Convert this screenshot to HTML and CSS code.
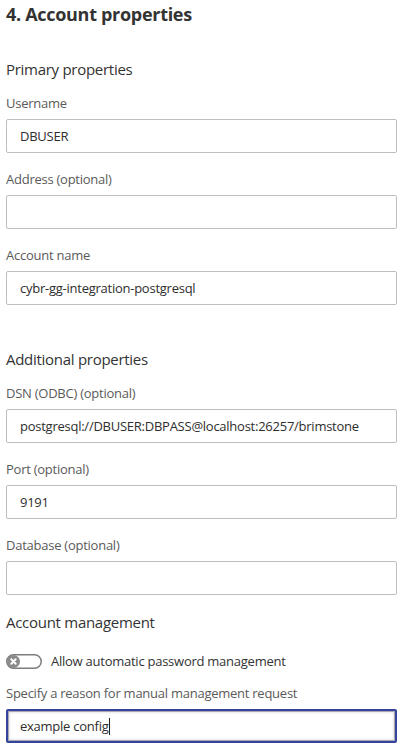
FILE: index.html
```html
<!DOCTYPE html>
<html lang="en">
<head>
<meta charset="utf-8">
<title>Account properties</title>
<link rel="stylesheet" href="styles.css">
</head>
<body>
<main class="panel">
  <h2 class="title">4. Account properties</h2>

  <section class="group group-primary">
    <h3 class="section-title">Primary properties</h3>
    <div class="field">
      <label class="label" for="username">Username</label>
      <input class="input" id="username" type="text" value="DBUSER">
    </div>
    <div class="field">
      <label class="label" for="address">Address (optional)</label>
      <input class="input" id="address" type="text" value="">
    </div>
    <div class="field">
      <label class="label" for="accname">Account name</label>
      <input class="input" id="accname" type="text" value="cybr-gg-integration-postgresql">
    </div>
  </section>

  <section class="group group-additional">
    <h3 class="section-title">Additional properties</h3>
    <div class="field">
      <label class="label" for="dsn">DSN (ODBC) (optional)</label>
      <input class="input" id="dsn" type="text" value="postgresql://DBUSER:DBPASS@localhost:26257/brimstone">
    </div>
    <div class="field">
      <label class="label" for="port">Port (optional)</label>
      <input class="input" id="port" type="text" value="9191">
    </div>
    <div class="field">
      <label class="label" for="database">Database (optional)</label>
      <input class="input" id="database" type="text" value="">
    </div>
  </section>

  <section class="group group-management">
    <h3 class="section-title">Account management</h3>
    <div class="toggle-row">
      <svg class="toggle" width="36" height="15" viewBox="0 0 36 15" aria-hidden="true">
        <rect x="0.75" y="0.75" width="34.5" height="13.5" rx="6.75" fill="#fff" stroke="#7d7d7d" stroke-width="1.5"/>
        <circle cx="7.5" cy="7.5" r="6.5" fill="#8a8a8a"/>
        <path d="M5.3 5.3 L9.7 9.7 M9.7 5.3 L5.3 9.7" stroke="#fff" stroke-width="2" stroke-linecap="round"/>
      </svg>
      <span class="toggle-label">Allow automatic password management</span>
    </div>
    <div class="field field-reason">
      <label class="label" for="reason">Specify a reason for manual management request</label>
      <div class="input input-focused" id="reason" role="textbox">example config<span class="caret"></span></div>
    </div>
  </section>
</main>
</body>
</html>
```

FILE: styles.css
```css
* {
  box-sizing: border-box;
}

html, body {
  margin: 0;
  padding: 0;
  background: #ffffff;
}

body {
  font-family: "Open Sans", "Liberation Sans", sans-serif;
  color: #333333;
  letter-spacing: -0.25px;
}

.panel {
  width: 397px;
  padding-left: 6px;
  display: flex;
  flex-direction: column;
}

.title {
  margin: 0;
  padding-top: 2px;
  font-size: 18px;
  line-height: 24px;
  font-weight: 700;
  color: #333333;
  letter-spacing: -0.3px;
}

.group {
  display: flex;
  flex-direction: column;
}

.group-primary {
  margin-top: 33px;
}

.group-additional {
  margin-top: 27px;
}

.section-title {
  margin: 0 0 15px 0;
  font-size: 15px;
  line-height: 20px;
  font-weight: 400;
  color: #333333;
  letter-spacing: -0.28px;
}

.field {
  display: flex;
  flex-direction: column;
  margin-bottom: 17px;
}

.label {
  font-size: 13px;
  line-height: 18px;
  color: #5a5a5a;
  margin-bottom: 7px;
}

.input {
  display: flex;
  align-items: center;
  width: 391px;
  height: 34px;
  margin: 0;
  padding: 0 12px 0 13px;
  border: 1px solid #bdbdbd;
  border-radius: 2px;
  font-family: "Open Sans", "Liberation Sans", sans-serif;
  font-size: 13px;
  letter-spacing: -0.25px;
  color: #2e2e2e;
  background: #ffffff;
  outline: none;
}

.input-focused {
  border: 2px solid #34449c;
  padding-left: 12px;
  box-shadow: inset 0 0 0 1px #a9a9b4, inset 0 0 3px 1px rgba(0, 0, 0, 0.18);
  white-space: pre;
}

.caret {
  display: inline-block;
  width: 1px;
  height: 17px;
  background: #222222;
}

.toggle-row {
  display: flex;
  align-items: center;
  gap: 9px;
  height: 18px;
}

.toggle {
  flex: none;
  display: block;
}

.toggle-label {
  font-size: 13px;
  line-height: 18px;
  color: #333333;
}

.group-management .section-title {
  margin-bottom: 20px;
}

.field-reason {
  margin-top: 14px;
  margin-bottom: 0;
}
```
